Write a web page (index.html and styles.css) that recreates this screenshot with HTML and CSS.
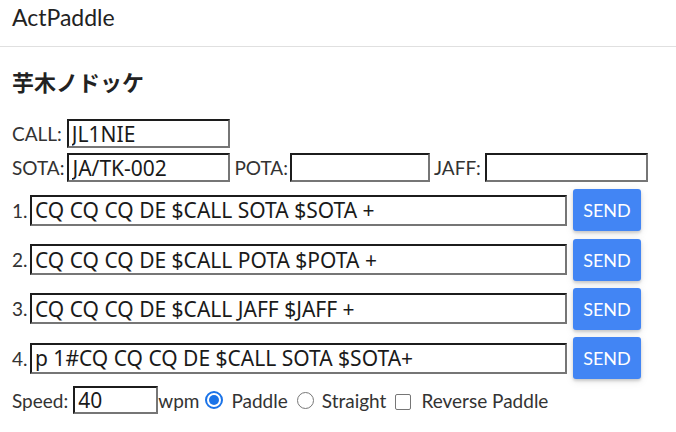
FILE: index.html
```html
<!DOCTYPE html>
<html lang="ja">
<head>
<meta charset="utf-8">
<title>ActPaddle</title>
<link rel="stylesheet" href="styles.css">
</head>
<body>
<header class="topbar">ActPaddle</header>
<main class="content">
  <h2 class="title">芋木ノドッケ</h2>
  <div class="line">
    <label class="lbl g5">CALL:</label><input class="field w163" type="text" value="JL1NIE">
  </div>
  <div class="line">
    <label class="lbl g3">SOTA:</label><input class="field w163" type="text" value="JA/TK-002">
    <label class="lbl ml4">POTA:</label><input class="field w140" type="text" value="">
    <label class="lbl ml4 g4">JAFF:</label><input class="field w163" type="text" value="">
  </div>
  <div class="cmd">
    <span class="num">1.</span><input class="field wide" type="text" value="CQ CQ CQ DE $CALL SOTA $SOTA +"><button class="send">SEND</button>
  </div>
  <div class="cmd">
    <span class="num">2.</span><input class="field wide" type="text" value="CQ CQ CQ DE $CALL POTA $POTA +"><button class="send">SEND</button>
  </div>
  <div class="cmd">
    <span class="num">3.</span><input class="field wide" type="text" value="CQ CQ CQ DE $CALL JAFF $JAFF +"><button class="send">SEND</button>
  </div>
  <div class="cmd">
    <span class="num">4.</span><input class="field wide" type="text" value="p 1#CQ CQ CQ DE $CALL SOTA $SOTA+"><button class="send">SEND</button>
  </div>
  <div class="speed">
    <label class="lbl sp">Speed:</label><input class="field w85" type="text" value="40"><span class="lbl">wpm</span>
    <span class="radio on"></span><span class="opt">Paddle</span>
    <span class="radio"></span><span class="opt">Straight</span>
    <span class="check"></span><span class="opt">Reverse Paddle</span>
  </div>
</main>
</body>
</html>
```

FILE: styles.css
```css
* { box-sizing: border-box; }
html, body { margin: 0; padding: 0; background: #fff; }
body {
  font-family: Lato, "Noto Sans CJK JP", sans-serif;
  color: #333;
}
.topbar {
  height: 47px;
  padding: 3px 12px 0;
  font-size: 23px;
  line-height: 28px;
  border-bottom: 1px solid #e0e0e0;
  color: #222;
}
.content { padding: 0 12px; }
.title {
  margin: 20px 0 24px;
  font-family: "Noto Sans CJK JP", sans-serif;
  font-size: 22px;
  line-height: 28px;
  font-weight: 700;
  color: #222;
}
.line {
  display: flex;
  align-items: center;
  height: 29px;
  margin-bottom: 5px;
}
.lbl, .num, .opt {
  font-size: 19px;
  color: #333;
  white-space: nowrap;
}
.lbl { margin-right: 2px; }
.g5 { margin-right: 5px; }
.g3 { margin-right: 3px; }
.g4 { margin-right: 4px; }
.ml4 { margin-left: 4px; }
.field {
  height: 29px;
  padding: 0 3px;
  border-style: solid;
  border-width: 2px;
  border-color: #1c1c1c #767676 #767676 #1c1c1c;
  font-family: "Noto Sans", sans-serif;
  font-size: 21px;
  color: #1a1a1a;
  background: #fff;
  outline: none;
}
.w163 { width: 163px; }
.w140 { width: 140px; }
.w85 { width: 85px; }
.cmd {
  display: flex;
  align-items: center;
  height: 42px;
  margin-top: 7.33px;
}
.num { width: 18px; }
.wide { width: 537px; height: 31px; }
.send {
  margin-left: 6px;
  width: 68px;
  height: 42px;
  border: none;
  border-radius: 3px;
  background: #4285f4;
  color: #fff;
  font-family: Lato, sans-serif;
  font-size: 18px;
  box-shadow: 0 2px 3px rgba(0,0,0,0.16), 0 2px 8px rgba(0,0,0,0.1);
  padding: 0;
}
.speed {
  display: flex;
  align-items: center;
  height: 28px;
  margin-top: 7px;
}
.speed .field { height: 28px; }
.speed .lbl.sp { margin-right: 5px; }
.speed .lbl { margin-right: 0; }
.radio {
  width: 17px;
  height: 17px;
  border-radius: 50%;
  border: 1px solid #777;
  margin: 0 8px 0 0;
  position: relative;
  background: #fff;
}
.radio.on {
  width: 18px;
  height: 18px;
  margin-left: 6px;
  border: 2px solid #1a73e8;
}
.radio.on::after {
  content: "";
  position: absolute;
  left: 2px; top: 2px;
  width: 10px; height: 10px;
  border-radius: 50%;
  background: #1a73e8;
}
.opt { margin-right: 9px; }
.check {
  width: 16px;
  height: 16px;
  border: 1px solid #767676;
  border-radius: 2px;
  margin: 3px 10px 0 0;
}
```
